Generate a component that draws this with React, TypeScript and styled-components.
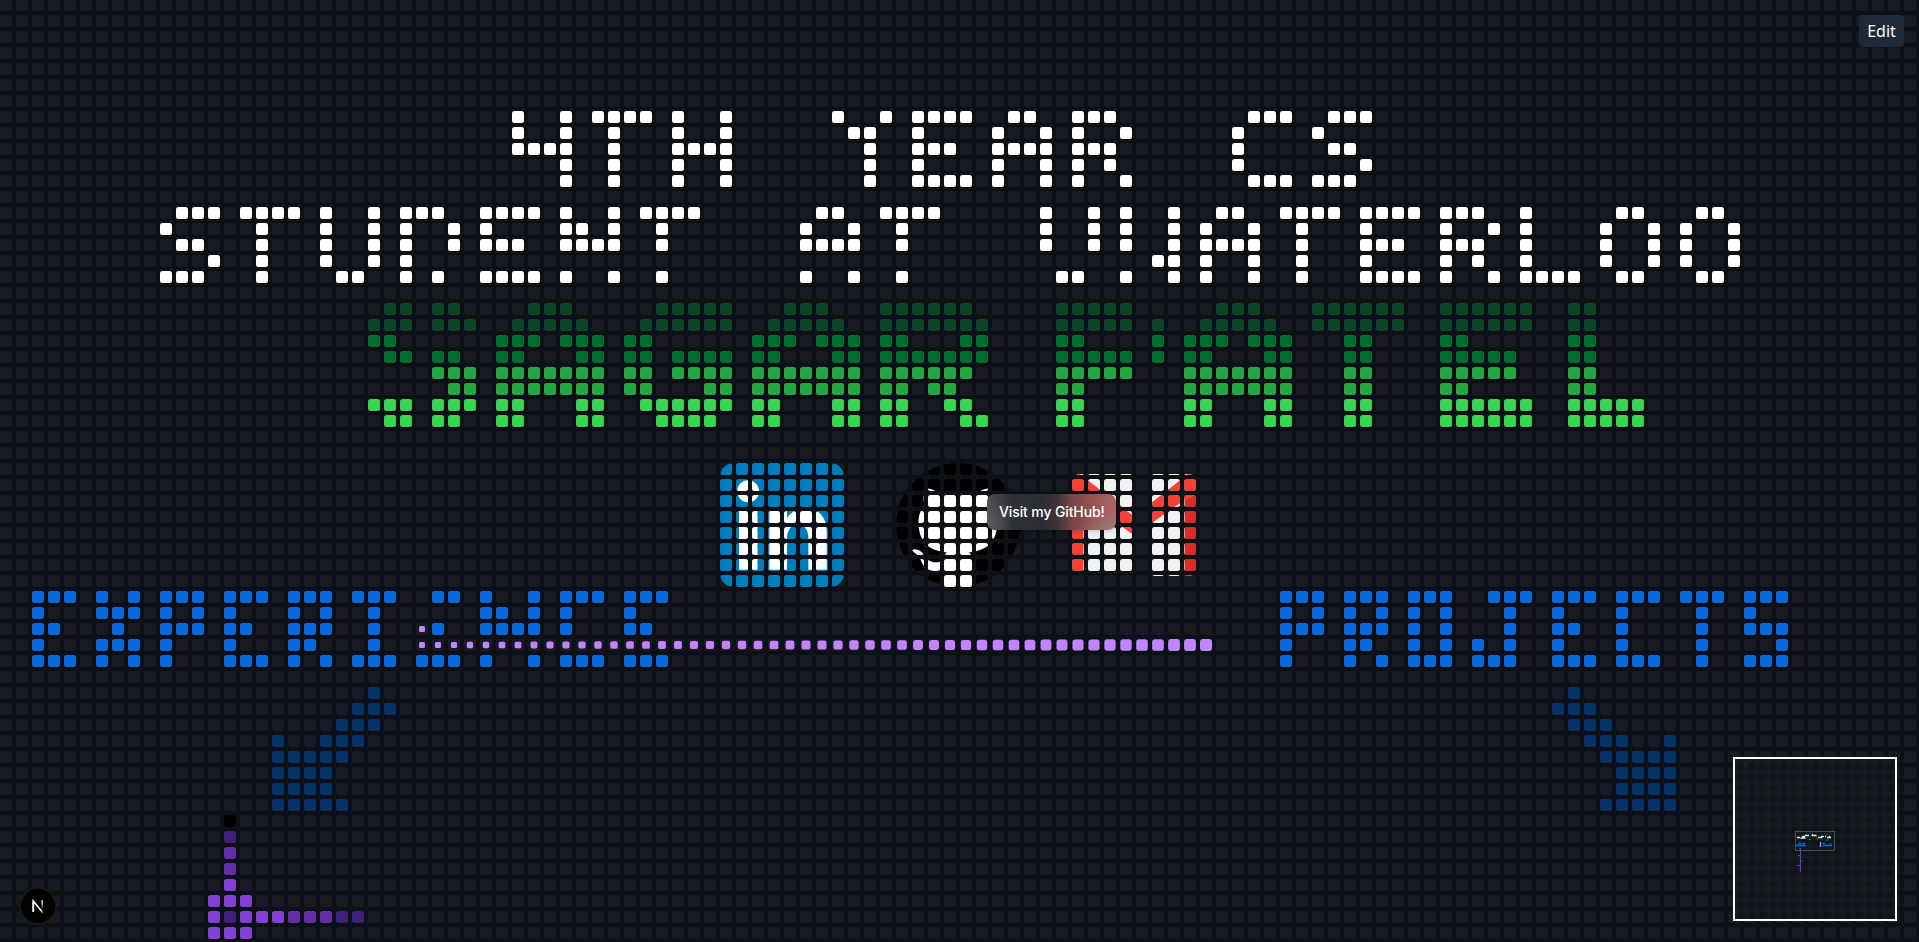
import React from "react";
import styled, { createGlobalStyle } from "styled-components";

const COLUMNS = 120;
const ROWS = 59;

const TONES = {
  base: "#161b22",
  white: "#ffffff",
  green1: "#0e4429",
  green2: "#006d32",
  green3: "#26a641",
  green4: "#39d353",
  blue: "#0969da",
  navy: "#0a3069",
  black: "#000000",
  violet1: "#3e1f79",
  violet2: "#6130a8",
  violet3: "#8041d4",
};

type Tone = keyof typeof TONES;

/* Each entry paints the listed columns of one board row; "a-b" is an inclusive run. */
const ARTWORK: Array<[number, Tone, string]> = [
  [7, "white", "32 35 37-40 42 45 52 55 57-60 63 64 67-69 78-80 83-85"],
  [8, "white", "32 35 38 42 45 53 54 57 62 65 67 70 77 82"],
  [9, "white", "32-35 38 42-45 54 57-59 62-65 67-69 77 83 84"],
  [10, "white", "35 38 42 45 54 57 62 65 67 69 77 85"],
  [11, "white", "35 38 42 45 54 57-60 62 65 67 70 78-80 82-84"],

  [13, "white", "11-13 15-18 20 23 25-27 30-33 35 38 40-43 51 52 55-58 65 68 70 73 76 77 80-83 85-88 90-92 95 101 102 106 107"],
  [14, "white", "10 16 20 23 25 28 30 35 36 38 41 50 53 56 65 68 70 73 75 78 81 85 90 93 95 100 103 105 108"],
  [15, "white", "11 12 16 20 23 25 28 30-32 35-38 41 50-53 56 65 68 70 73 75-78 81 85-87 90-92 95 100 103 105 108"],
  [16, "white", "13 16 20 23 25 72 73 75 78 81 85 90 92 95 100 103 105 108"],
  [17, "white", "10-12 16 21 22 25 27 30-33 35 38 41 50 53 56 66 67 70 73 75 78 81 85-88 90 93 95-98 101 102 106 107"],

  [19, "green1", "24 25 27 28 33-35 41-45 49-51 55-60 66-70 76-78 82-87 90-95 98 99"],
  [20, "green1", "23-25 27-29 32-36 40-45 48-52 55-61 66-70 72 75-79 82-87 90-95 98 99"],
  [21, "green2", "23 24 31-33 35-37 39 40 47-49 51-53 55 56 60 61 66 67 72 74-76 78-80 84 85 90 91 98 99"],
  [22, "green2", "24 25 27 28 31 32 36 37 39 40 42-45 47 48 52 53 55-61 66-70 72 74 75 79 80 84 85 90-94 98 99"],
  [23, "green3", "27-29 31-37 39 40 42-45 47-53 55-60 66-70 74-80 84 85 90-94 98 99"],
  [24, "green3", "28 29 31-37 39 40 44 45 47-53 55 56 58 59 66 67 74-80 84 85 90 91 98 99"],
  [25, "green4", "23-25 27-29 31 32 36 37 40-45 47 48 52 53 55 56 59 60 66 67 74 75 79 80 84 85 90-95 98-102"],
  [26, "green4", "24 25 27 28 31 32 36 37 41-44 47 48 52 53 55 56 60 61 66 67 74 75 79 80 84 85 90-95 98-102"],

  [37, "blue", "2-4 6 8 10-12 14-16 18-20 22-24 27 28 30 33 35-37 39-41 80-82 84-86 88-90 93-95 97-99 101-103 105-107 109-111"],
  [38, "blue", "2 6-8 10 12 14 18 20 23 30 31 33 35 39 80 82 84 86 88 90 94 97 101 106 109"],
  [39, "blue", "2 3 7 10-12 14 15 18-20 23 27 30-33 35 39 40 80-82 84-86 88 90 94 97 98 101 106 109-111"],
  [40, "blue", "2 6-8 10 14 18 19 23 80 84 85 88 90 92 94 97 101 106 111"],
  [41, "blue", "2-4 6 8 10 14-16 18 20 22-24 26-28 30 33 35-37 39-41 80 84 86 88-90 92-94 97-99 101-103 106 109-111"],

  [43, "navy", "23 98"],
  [44, "navy", "22-24 97-99"],
  [45, "navy", "21-23 98-100"],
  [46, "navy", "17 20-22 99-101 104"],
  [47, "navy", "17-21 100-104"],
  [48, "navy", "17-20 101-104"],
  [49, "navy", "17-20 101-104"],
  [50, "navy", "17-21 100-104"],

  [51, "black", "14"],
  [52, "violet1", "14"],
  [53, "violet2", "14"],
  [54, "violet2", "14"],
  [55, "violet3", "14"],
  [56, "violet3", "13-15"],
  [57, "violet3", "13 15-17"],
  [57, "violet1", "14 21 22"],
  [57, "violet2", "18-20"],
  [58, "violet3", "13-15"],
];

const board: Tone[][] = Array.from({ length: ROWS }, () =>
  Array.from({ length: COLUMNS }, () => "base" as Tone)
);

ARTWORK.forEach(([row, tone, runs]) => {
  runs.split(" ").forEach((run) => {
    const [from, to = from] = run.split("-").map(Number);
    for (let col = from; col <= to; col += 1) board[row][col] = tone;
  });
});

/* Cursor trail: dots grow from half a cell to a full cell. */
const TRAIL_START = 26;
const TRAIL_END = 75;

function trailScale(row: number, col: number): number | null {
  if (row === 39 && col === TRAIL_START) return 0.5;
  if (row !== 40 || col < TRAIL_START || col > TRAIL_END) return null;
  return 0.5 + (0.5 * (col - TRAIL_START)) / (TRAIL_END - TRAIL_START);
}

const GlobalStyle = createGlobalStyle`
  html, body { margin: 0; padding: 0; background: #0d1117; }
  body { overflow: hidden; }
`;

const Page = styled.main`
  display: grid;
  grid-template: 942px / 1919px;
  overflow: hidden;
  background: #0d1117;
  font-family: "Noto Sans", sans-serif;

  > * {
    grid-area: 1 / 1;
  }
`;

const Board = styled.div`
  display: flex;
  flex-direction: column;
  gap: 4px;
  margin-top: -1px;
  min-width: 0;
`;

const BoardRow = styled.div`
  display: flex;
  gap: 4px;
`;

const Cell = styled.div<{ $tone: Tone }>`
  display: flex;
  flex: 0 0 12px;
  height: 12px;
  border-radius: 2.5px;
  background: ${({ $tone }) => TONES[$tone]};
`;

const TrailDot = styled.span`
  flex: 1;
  border-radius: 3px;
  background: #c084fc;
`;

const Overlay = styled.div`
  display: flex;
  flex-direction: column;
  justify-content: space-between;
  z-index: 1;
`;

const TopBar = styled.header`
  display: flex;
  align-items: flex-start;
  justify-content: flex-end;
  height: 448px;
  padding: 15px 15px 0;
`;

const SocialLinks = styled.nav`
  display: flex;
  justify-content: center;
  gap: 52px;
  padding-right: 3px;
`;

const BottomBar = styled.footer`
  display: flex;
  align-items: flex-end;
  justify-content: space-between;
  height: 334px;
  padding: 0 22px 21px 19px;
`;

const SocialLink = styled.a`
  position: relative;
  width: 124px;
  height: 124px;

  svg {
    display: block;
  }
`;

const Tooltip = styled.span`
  position: absolute;
  z-index: 1;
  top: 31px;
  left: 91px;
  padding: 8px 12px;
  width: 105px;
  border-radius: 8px;
  color: #fff;
  font: 500 14px/20px "Inter", sans-serif;
  letter-spacing: -0.12px;
  white-space: nowrap;
  background:
    radial-gradient(ellipse 40px 24px at 100% 110%, rgba(140, 140, 138, 0.75), transparent),
    radial-gradient(ellipse 26px 30px at 0 80%, rgba(110, 112, 114, 0.5), transparent),
    linear-gradient(90deg, #48494c 0%, #2e3135 20%, #2a2d31 44%, #43343a 55%, #74444a 65%, #8e4d4e 76%, #ac6764 100%);
  box-shadow: 0 4px 6px -1px rgba(0, 0, 0, 0.1), 0 2px 4px -2px rgba(0, 0, 0, 0.1);
`;

const EditButton = styled.button`
  padding: 4px 8px;
  width: 45px;
  border: 0;
  border-radius: 4px;
  color: #fff;
  background: #1f2937;
  font: 400 16px/24px "Noto Sans", sans-serif;
`;

const MiniMap = styled.div`
  border: 2px solid #fff;
  background: #12181d;

  svg {
    display: block;
  }
`;

const DevBadge = styled.div`
  margin-bottom: -4px;
  border: 1px solid #1c1c1d;
  border-radius: 50%;
  background: rgba(0, 0, 0, 0.9);
  box-shadow: inset 0 0 0 1px rgba(255, 255, 255, 0.1), 0 16px 32px -8px rgba(0, 0, 0, 0.24);

  svg {
    display: block;
  }
`;

function CellMask({ id, children }: { id: string; children?: React.ReactNode }) {
  return (
    <defs>
      <pattern id={`${id}-tile`} width="16" height="16" patternUnits="userSpaceOnUse">
        <rect width="12" height="12" rx="2.5" fill="#fff" />
      </pattern>
      <mask id={id} maskUnits="userSpaceOnUse" x="0" y="0" width="124" height="124">
        <rect width="124" height="124" fill={`url(#${id}-tile)`} />
        {children}
      </mask>
    </defs>
  );
}

function LinkedInIcon() {
  return (
    <svg width="124" height="124" viewBox="0 0 124 124">
      <CellMask id="linkedin" />
      <g mask="url(#linkedin)">
        <g transform="scale(1.7222)">
          <rect width="72" height="72" rx="8" fill="#007ebb" />
          <path
            fill="#fff"
            d="M62 62H51.316V43.802c0-4.989-1.896-7.777-5.845-7.777-4.296 0-6.541 2.901-6.541 7.777V62H28.633V27.333H38.93v4.67s3.096-5.729 10.453-5.729C56.736 26.274 62 30.764 62 40.051V62ZM16.349 22.794C12.842 22.794 10 19.93 10 16.397 10 12.864 12.842 10 16.349 10c3.508 0 6.348 2.864 6.348 6.397 0 3.533-2.84 6.397-6.348 6.397ZM11.033 62h10.736V27.333H11.033V62Z"
          />
        </g>
      </g>
    </svg>
  );
}

function GitHubIcon() {
  return (
    <svg width="124" height="124" viewBox="0 0 124 124">
      <CellMask id="github" />
      <g mask="url(#github)">
        <g transform="scale(5.1667) translate(0 -0.297)">
          <circle cx="12" cy="12.297" r="11.7" fill="#fff" />
          <path fill="#fff" d="M9 19h6.05v4.9l.3.4H8.7l.3-.4Z" />
          <path
            fill="#000"
            d="M12 .297c-6.63 0-12 5.373-12 12 0 5.303 3.438 9.8 8.205 11.385.6.113.82-.258.82-.577 0-.285-.01-1.04-.015-2.04-3.338.724-4.042-1.61-4.042-1.61C4.422 18.07 3.633 17.7 3.633 17.7c-1.087-.744.084-.729.084-.729 1.205.084 1.838 1.236 1.838 1.236 1.07 1.835 2.809 1.305 3.495.998.108-.776.417-1.305.76-1.605-2.665-.3-5.466-1.332-5.466-5.93 0-1.31.465-2.38 1.235-3.22-.135-.303-.54-1.523.105-3.176 0 0 1.005-.322 3.3 1.23.96-.267 1.98-.399 3-.405 1.02.006 2.04.138 3 .405 2.28-1.552 3.285-1.23 3.285-1.23.645 1.653.24 2.873.12 3.176.765.84 1.23 1.91 1.23 3.22 0 4.61-2.805 5.625-5.475 5.92.42.36.81 1.096.81 2.22 0 1.606-.015 2.896-.015 3.286 0 .315.21.69.825.57C20.565 22.092 24 17.592 24 12.297c0-6.627-5.373-12-12-12"
          />
        </g>
      </g>
    </svg>
  );
}

function GmailIcon() {
  return (
    <svg width="124" height="124" viewBox="0 0 124 124">
      <CellMask id="gmail">
        <rect x="64" width="12" height="124" fill="#000" />
        <rect y="112" width="76" height="12" fill="#000" />
      </CellMask>
      <g mask="url(#gmail)">
        <rect y="11" width="124" height="102" rx="8" fill="#f2f2f2" />
        <path d="M0 35v70c0 5 3 8 8 8h3.500V35Z" fill="#f44336" />
        <path d="M124 31v74c0 5-3 8-8 8h-3.500V37Z" fill="#d32f2f" />
        <path d="M0 35V20c0-5 3-9 8-9l54 42.500L116 11c5 0 8 4 8 9v12l-11.500 5L62 72.500 11.500 35Z" fill="#f44336" />
      </g>
    </svg>
  );
}

function MiniMapDrawing() {
  return (
    <svg width="160" height="160" viewBox="0 0 160 160">
      <defs>
        <pattern id="map-tile" width="32" height="32" patternUnits="userSpaceOnUse">
          <path d="M3 4h6v6H3zM14 4h6v6h-6zM24 4h6v6h-6zM3 15h6v6H3zM14 15h6v6h-6zM24 15h6v6h-6zM3 26h6v5H3zM14 26h6v5h-6zM24 26h6v5h-6z" fill="#0d1318" fillOpacity=".75" />
          <path d="M1.500 0v32M11.500 0v32M22 0v32M0 2.500h32M0 13h32M0 23.500h32" stroke="#192127" strokeWidth=".8" strokeOpacity=".7" />
        </pattern>
      </defs>
      <rect width="160" height="160" fill="url(#map-tile)" />
      <path d="M8 6h3M9 5h1" stroke="#7a0c12" />
      <path d="M62 78.500h3M65.500 79h5M67 77.500h3M70 76.500h4M77 75.500h1M76.500 76.500h5M83 78.500h4M86 77.500h3M90 77.500h1M92 78.500h4M94 77.500h1" stroke="#fff" strokeWidth="1.300" strokeOpacity=".9" />
      <path d="M74 80.500h1" stroke="#39d353" />
      <path d="M81 79.500h3M82 81h1M86 80h2M90 81h4" stroke="#0e5a31" strokeWidth="1.500" />
      <path d="M60 86.500h11M63 84.500h3M67 84.500h3M88 86.500h9M87 84.500h3M96 84v3" stroke="#0969da" strokeWidth="1.300" />
      <path d="M85.500 83v5" stroke="#c084fc" strokeWidth="1.200" />
      <path d="M65.500 89v24M64 90h2M63 96.500h3M66 102h2M62 106.500h4M64 110h2" stroke="#6b34bd" strokeWidth="1.100" />
      <rect x="60.500" y="72.500" width="39" height="19" fill="none" stroke="#4a4d50" />
    </svg>
  );
}

function NextLogo() {
  return (
    <svg width="36" height="36" viewBox="0 0 36 36" fill="none">
      <defs>
        <linearGradient id="next-diagonal" x1="18" y1="18" x2="24" y2="26" gradientUnits="userSpaceOnUse">
          <stop offset="0.500" stopColor="#fff" />
          <stop offset="1" stopColor="#fff" stopOpacity="0" />
        </linearGradient>
        <linearGradient id="next-stem" x1="22" y1="12" x2="22" y2="22" gradientUnits="userSpaceOnUse">
          <stop stopColor="#fff" />
          <stop offset="1" stopColor="#fff" stopOpacity="0" />
        </linearGradient>
      </defs>
      <path d="M13.300 24V12.900L23.200 25.200" stroke="url(#next-diagonal)" strokeWidth="1.600" />
      <path d="M13.300 24V12.900" stroke="#fff" strokeWidth="1.600" />
      <path d="M22.200 12.200v10.500" stroke="url(#next-stem)" strokeWidth="1.600" />
    </svg>
  );
}

export default function App() {
  return (
    <>
      <GlobalStyle />
      <Page>
        <Board>
          {board.map((tones, row) => (
            <BoardRow key={row}>
              {tones.map((tone, col) => {
                const scale = trailScale(row, col);
                return (
                  <Cell key={col} $tone={tone}>
                    {scale !== null && <TrailDot style={{ transform: `scale(${scale})` }} />}
                  </Cell>
                );
              })}
            </BoardRow>
          ))}
        </Board>

        <Overlay>
          <TopBar>
            <EditButton>Edit</EditButton>
          </TopBar>
          <SocialLinks>
            <SocialLink aria-label="LinkedIn">
              <LinkedInIcon />
            </SocialLink>
            <SocialLink aria-label="GitHub">
              <GitHubIcon />
              <Tooltip>Visit my GitHub!</Tooltip>
            </SocialLink>
            <SocialLink aria-label="Gmail">
              <GmailIcon />
            </SocialLink>
          </SocialLinks>
          <BottomBar>
            <DevBadge>
              <NextLogo />
            </DevBadge>
            <MiniMap>
              <MiniMapDrawing />
            </MiniMap>
          </BottomBar>
        </Overlay>
      </Page>
    </>
  );
}
